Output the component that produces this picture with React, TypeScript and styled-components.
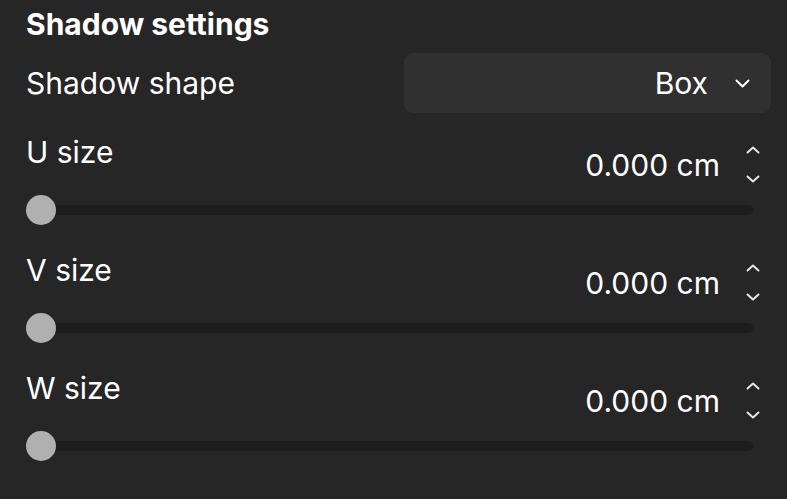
import React from 'react';
import styled, { createGlobalStyle } from 'styled-components';

const GlobalStyle = createGlobalStyle`
  html, body {
    margin: 0;
    padding: 0;
    background-color: #262626;
  }
  body {
    font-family: Inter, "Noto Sans", sans-serif;
    color: #ffffff;
  }
`;

const Panel = styled.div`
  display: flex;
  flex-direction: column;
  padding: 6px 16px 0 26px;
  width: 787px;
  box-sizing: border-box;
`;

const Title = styled.h2`
  margin: 0;
  font-size: 30px;
  line-height: 36px;
  font-weight: 700;
  color: #ffffff;
`;

const Row = styled.div`
  display: flex;
  align-items: center;
  justify-content: space-between;
  margin-top: 11px;
`;

const Label = styled.span`
  font-size: 30px;
  line-height: 36px;
  font-weight: 400;
  color: #ffffff;
`;

const Select = styled.button`
  display: flex;
  align-items: center;
  justify-content: flex-end;
  gap: 27px;
  width: 367px;
  height: 60px;
  padding: 0 21px 0 16px;
  box-sizing: border-box;
  border: none;
  border-radius: 9px;
  background-color: #303030;
  color: #ffffff;
  font-family: inherit;
  font-size: 30px;
  cursor: pointer;
`;

const Group = styled.div`
  display: flex;
  flex-direction: column;
  margin-top: 21px;

  & + & {
    margin-top: 27px;
  }
`;

const Header = styled.div`
  display: flex;
  align-items: flex-start;
  justify-content: space-between;
  padding-right: 7px;
`;

const ValueBox = styled.div`
  display: flex;
  align-items: center;
  gap: 22px;
  margin-top: 4px;
`;

const Value = styled.span`
  font-size: 30px;
  line-height: 36px;
  color: #ffffff;
`;

const Spinner = styled.div`
  display: flex;
  flex-direction: column;
  gap: 5px;
`;

const SpinButton = styled.button`
  display: flex;
  align-items: center;
  justify-content: center;
  width: 22px;
  height: 24px;
  padding: 0;
  border: none;
  background: none;
  color: #e6e6e6;
  cursor: pointer;
`;

const Slider = styled.div`
  position: relative;
  display: flex;
  align-items: center;
  height: 30px;
  margin-top: 4px;
  margin-right: 18px;
`;

const Track = styled.div`
  flex: 1;
  height: 10px;
  margin-left: 2px;
  border-radius: 5px;
  background-color: #1d1d1d;
`;

const Thumb = styled.div<{ $pos: number }>`
  position: absolute;
  top: 0;
  left: ${p => p.$pos}%;
  width: 30px;
  height: 30px;
  border-radius: 50%;
  background-color: #b0b0b0;
`;

const Chevron = ({ up = false, w = 14, h = 8 }: { up?: boolean; w?: number; h?: number }) => (
  <svg width={w} height={h} viewBox={`0 0 ${w} ${h}`} fill="none">
    <polyline
      points={up ? `1.5,${h - 1.5} ${w / 2},1.5 ${w - 1.5},${h - 1.5}` : `1.5,1.5 ${w / 2},${h - 1.5} ${w - 1.5},1.5`}
      stroke="currentColor"
      strokeWidth="2"
      strokeLinecap="round"
      strokeLinejoin="round"
    />
  </svg>
);

const sizes = ['U size', 'V size', 'W size'];

export default function App() {
  return (
    <>
      <GlobalStyle />
      <Panel>
        <Title>Shadow settings</Title>
        <Row>
          <Label>Shadow shape</Label>
          <Select>
            <span>Box</span>
            <Chevron w={15} h={9} />
          </Select>
        </Row>
        {sizes.map(name => (
          <Group key={name}>
            <Header>
              <Label>{name}</Label>
              <ValueBox>
                <Value>0.000 cm</Value>
                <Spinner>
                  <SpinButton aria-label="Increase">
                    <Chevron up />
                  </SpinButton>
                  <SpinButton aria-label="Decrease">
                    <Chevron />
                  </SpinButton>
                </Spinner>
              </ValueBox>
            </Header>
            <Slider>
              <Track />
              <Thumb $pos={0} />
            </Slider>
          </Group>
        ))}
      </Panel>
    </>
  );
}
